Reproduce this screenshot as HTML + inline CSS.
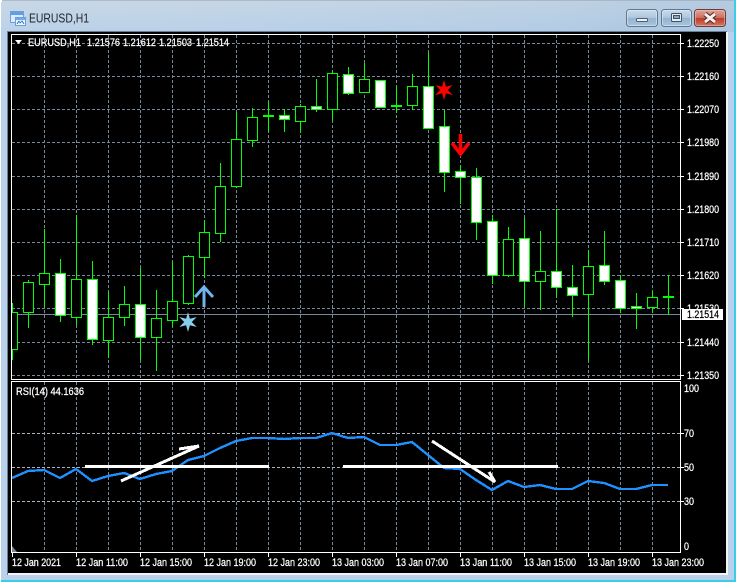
<!DOCTYPE html>
<html lang="en"><head><meta charset="utf-8"><title>EURUSD,H1</title>
<style>
html,body{margin:0;padding:0;background:#fff;width:738px;height:582px;overflow:hidden}
svg{display:block;position:absolute;left:0;top:0}
text{font-family:"Liberation Sans",sans-serif;font-size:11px;fill:#fff;stroke:#fff;stroke-width:.25px;white-space:pre}
</style></head><body>
<svg width="738" height="582" viewBox="0 0 738 582" xmlns="http://www.w3.org/2000/svg">
<defs>
<linearGradient id="tb" x1="0" y1="0" x2="0" y2="1"><stop offset="0" stop-color="#c6d5e4"/><stop offset="1" stop-color="#b6cfe8"/></linearGradient>
<linearGradient id="tbh" x1="0" y1="0" x2="1" y2="0"><stop offset="0" stop-color="#fff" stop-opacity=".06"/><stop offset=".75" stop-color="#8fb2d2" stop-opacity=".1"/><stop offset="1" stop-color="#8fb2d2" stop-opacity=".3"/></linearGradient>
<linearGradient id="bt" x1="0" y1="0" x2="0" y2="1"><stop offset="0" stop-color="#cbdcec"/><stop offset=".48" stop-color="#adc6dd"/><stop offset=".52" stop-color="#95b3cf"/><stop offset="1" stop-color="#a9c6df"/></linearGradient>
<linearGradient id="cl" x1="0" y1="0" x2="0" y2="1"><stop offset="0" stop-color="#dfa79d"/><stop offset=".48" stop-color="#cf6f5f"/><stop offset=".52" stop-color="#b93c2b"/><stop offset="1" stop-color="#cf7a62"/></linearGradient>
<clipPath id="mainclip"><rect x="12" y="35" width="668" height="344"/></clipPath>
</defs>

<!-- window -->
<rect x="1" y="0" width="735" height="582" fill="#3ccde6"/>
<rect x="1" y="0" width="733" height="580" fill="#b9d1ea"/>
<rect x="1" y="0" width="733" height="32" fill="url(#tb)"/>
<rect x="1" y="0" width="733" height="32" fill="url(#tbh)"/>
<path d="M1 .5H734" stroke="#8ea2b6" stroke-width="1" opacity=".5"/>
<rect x="0" y="0" width="2" height="2" fill="#fff"/>
<rect x="7" y="31" width="720" height="544" fill="#6b7d90"/>
<rect x="8" y="32" width="720" height="543" fill="#f4f4f4"/>
<rect x="8" y="32" width="718" height="541" fill="#000"/>

<!-- title icon -->
<g shape-rendering="crispEdges">
<rect x="10.5" y="11.5" width="13" height="11" fill="#dfeafa" stroke="#6c9ed8"/>
<rect x="11" y="12" width="12" height="3" fill="#5f9fe6"/>
<rect x="15.5" y="17.5" width="10" height="8" fill="#eef4fc" stroke="#6c9ed8"/>
<rect x="16" y="18" width="9" height="2" fill="#6fabe8"/>
<path d="M17 24L19 21L20 23L22 21L24 24" fill="none" stroke="#4f87c8"/>
</g>
<text x="29" y="22.5" textLength="60" lengthAdjust="spacingAndGlyphs" style="font-size:13px;fill:#20262c;stroke:none">EURUSD,H1</text>

<!-- window buttons -->
<rect x="626.5" y="9.5" width="31" height="17" rx="3" fill="url(#bt)" stroke="#5d7891"/>
<rect x="627.5" y="10.5" width="29" height="15" rx="2" fill="none" stroke="#e4eef7" stroke-opacity=".55"/>
<rect x="661.5" y="9.5" width="30" height="17" rx="3" fill="url(#bt)" stroke="#5d7891"/>
<rect x="662.5" y="10.5" width="28" height="15" rx="2" fill="none" stroke="#e4eef7" stroke-opacity=".55"/>
<rect x="694.5" y="9.5" width="31" height="17" rx="3" fill="url(#cl)" stroke="#6d3a3a"/>
<rect x="695.5" y="10.5" width="29" height="15" rx="2" fill="none" stroke="#f2cfc6" stroke-opacity=".5"/>
<rect x="636.5" y="18.5" width="11" height="3" rx="1" fill="#eef2f6" stroke="#4d5f72"/>
<rect x="671.5" y="13.5" width="10" height="8" rx="1" fill="#e8eef4" stroke="#3f5164"/>
<rect x="673.5" y="15.5" width="6" height="3" fill="#8ba6bf" stroke="#3f5164" stroke-width="1"/>
<path d="M705 14L715 22M715 14L705 22" stroke="#5b2a26" stroke-width="5"/>
<path d="M705 14L715 22M715 14L705 22" stroke="#f6f1ee" stroke-width="3"/>

<!-- grid -->
<g fill="none" stroke="#778899" stroke-width="1" stroke-dasharray="3 2" shape-rendering="crispEdges">
<path d="M12 43.5H680M12 76.5H680M12 109.5H680M12 142.5H680M12 176.5H680M12 209.5H680M12 242.5H680M12 275.5H680M12 308.5H680M12 342.5H680M12 375.5H680"/>
<path d="M44.5 35V379M76.5 35V379M108.5 35V379M140.5 35V379M172.5 35V379M204.5 35V379M236.5 35V379M268.5 35V379M300.5 35V379M332.5 35V379M364.5 35V379M396.5 35V379M428.5 35V379M460.5 35V379M492.5 35V379M524.5 35V379M556.5 35V379M588.5 35V379M620.5 35V379M652.5 35V379"/>
<path d="M44.5 382V552M76.5 382V552M108.5 382V552M140.5 382V552M172.5 382V552M204.5 382V552M236.5 382V552M268.5 382V552M300.5 382V552M332.5 382V552M364.5 382V552M396.5 382V552M428.5 382V552M460.5 382V552M492.5 382V552M524.5 382V552M556.5 382V552M588.5 382V552M620.5 382V552M652.5 382V552"/>
<path d="M12 433.5H680M12 467.5H680M12 501.5H680" stroke="#a9b4bf"/>
</g>
<path d="M12 314.5H681" stroke="#778899" shape-rendering="crispEdges"/>

<!-- candles -->
<g clip-path="url(#mainclip)" shape-rendering="crispEdges" stroke="#00ff00" stroke-width="1">
<path fill="none" d="M12.5 303V360M28.5 280V328M44.5 229V307M60.5 259V322M76.5 215V325M92.5 261V345M108.5 292V358M124.5 286V326M140.5 268V360M156.5 290V371M172.5 262V327M188.5 255V305M204.5 220V278M220.5 163V242M236.5 112V188M252.5 108V147M268.5 102V132M284.5 109V132M300.5 104V133M316.5 79V112M332.5 71V121M348.5 67V95M364.5 63V92M396.5 86V113M412.5 74V110M428.5 53V128M444.5 110V192M460.5 165V204M476.5 168V240M492.5 215V284M508.5 227V277M524.5 218V307M540.5 231V310M556.5 209V297M572.5 265V317M588.5 250V361M604.5 231V285M620.5 275V313M636.5 293V329M652.5 291V313M668.5 275V315"/>
<g fill="#000">
<rect x="7.5" y="312.5" width="10" height="37"/>
<rect x="23.5" y="282.5" width="10" height="30"/>
<rect x="39.5" y="273.5" width="10" height="11"/>
<rect x="71.5" y="279.5" width="10" height="38"/>
<rect x="103.5" y="317.5" width="10" height="23"/>
<rect x="119.5" y="304.5" width="10" height="13"/>
<rect x="151.5" y="318.5" width="10" height="19"/>
<rect x="167.5" y="301.5" width="10" height="19"/>
<rect x="183.5" y="256.5" width="10" height="47"/>
<rect x="199.5" y="232.5" width="10" height="25"/>
<rect x="215.5" y="186.5" width="10" height="47"/>
<rect x="231.5" y="139.5" width="10" height="47"/>
<rect x="247.5" y="117.5" width="10" height="23"/>
<rect x="295.5" y="106.5" width="10" height="15"/>
<rect x="327.5" y="73.5" width="10" height="36"/>
<rect x="359.5" y="79.5" width="10" height="13"/>
<rect x="407.5" y="86.5" width="10" height="19"/>
<rect x="503.5" y="239.5" width="10" height="36"/>
<rect x="535.5" y="271.5" width="10" height="10"/>
<rect x="583.5" y="266.5" width="10" height="28"/>
<rect x="647.5" y="297.5" width="10" height="10"/>
</g>
<g fill="#fff">
<rect x="55.5" y="273.5" width="10" height="42"/>
<rect x="87.5" y="279.5" width="10" height="60"/>
<rect x="135.5" y="304.5" width="10" height="33"/>
<rect x="263.5" y="115.5" width="10" height="1"/>
<rect x="279.5" y="115.5" width="10" height="4"/>
<rect x="311.5" y="106.5" width="10" height="3"/>
<rect x="343.5" y="74.5" width="10" height="19"/>
<rect x="375.5" y="80.5" width="10" height="27"/>
<rect x="391.5" y="105.5" width="10" height="1"/>
<rect x="423.5" y="86.5" width="10" height="42"/>
<rect x="439.5" y="126.5" width="10" height="46"/>
<rect x="455.5" y="171.5" width="10" height="6"/>
<rect x="471.5" y="177.5" width="10" height="45"/>
<rect x="487.5" y="221.5" width="10" height="54"/>
<rect x="519.5" y="238.5" width="10" height="43"/>
<rect x="551.5" y="271.5" width="10" height="16"/>
<rect x="567.5" y="287.5" width="10" height="8"/>
<rect x="599.5" y="265.5" width="10" height="16"/>
<rect x="615.5" y="280.5" width="10" height="28"/>
<rect x="631.5" y="306.5" width="10" height="2"/>
<rect x="663.5" y="296.5" width="10" height="1"/>
</g>
</g>

<!-- objects on price chart -->
<path d="M204 307V287M195 297L204 287L213 297" fill="none" stroke="#6fb5ec" stroke-width="3"/>
<polygon points="188,312 189.9,318.7 196.7,317 191.8,322 196.7,327 189.9,325.3 188,332 186.1,325.3 179.3,327 184.2,322 179.3,317 186.1,318.7" fill="#87ceeb"/>
<polygon points="444,80 445.9,86.7 452.7,85 447.8,90 452.7,95 445.9,93.3 444,100 442.1,93.3 435.3,95 440.2,90 435.3,85 442.1,86.7" fill="#ff0000"/>
<path d="M460.5 134V154M452 143L460.5 154L469 143" fill="none" stroke="#ff0000" stroke-width="3.5"/>

<!-- RSI -->
<polyline fill="none" stroke="#1e90ff" stroke-width="2.4" shape-rendering="crispEdges" points="12,478 28,471 44,470 60,478 76,469 92,481 108,476 124,473 140,479 156,474 172,471 188,460 204,456 220,448 236,441 252,438 268,438 284,439 300,438 316,438 332,433 348,438 364,437 380,445 396,445 412,442 428,455 444,468 460,469 476,480 492,490 508,481 524,487 540,485 556,489 572,489 588,481 604,483 620,489 636,489 652,485 668,485"/>
<g fill="none" stroke="#fff" shape-rendering="crispEdges">
<path d="M85 466.5H269M343 466.5H558" stroke-width="3"/>
<path d="M121 481L199 446M179 449L199 446" stroke-width="3"/>
<path d="M432 441L495 482M489 472L495 482" stroke-width="3"/>
</g>
<polygon points="12,546 17,552 12,552" fill="#778899"/>

<!-- frames and ticks -->
<g fill="none" stroke="#fff" stroke-width="1" shape-rendering="crispEdges">
<rect x="11.5" y="34.5" width="669" height="345"/>
<rect x="11.5" y="381.5" width="669" height="171"/>
<path d="M680 43.5H684M680 76.5H684M680 109.5H684M680 142.5H684M680 176.5H684M680 209.5H684M680 242.5H684M680 275.5H684M680 308.5H684M680 342.5H684M680 375.5H684M680 433.5H684M680 467.5H684M680 501.5H684"/>
<path d="M12.5 552V557M76.5 552V557M140.5 552V557M204.5 552V557M268.5 552V557M332.5 552V557M396.5 552V557M460.5 552V557M524.5 552V557M588.5 552V557M652.5 552V557"/>
</g>

<!-- text -->
<path d="M15 40H22L18.5 44Z" fill="#fff"/>
<text x="28" y="46" textLength="53" lengthAdjust="spacingAndGlyphs">EURUSD,H1</text>
<text x="87" y="46" textLength="33" lengthAdjust="spacingAndGlyphs">1.21576</text>
<text x="123" y="46" textLength="33" lengthAdjust="spacingAndGlyphs">1.21612</text>
<text x="159" y="46" textLength="33" lengthAdjust="spacingAndGlyphs">1.21503</text>
<text x="196" y="46" textLength="33" lengthAdjust="spacingAndGlyphs">1.21514</text>
<text x="16" y="395" textLength="68" lengthAdjust="spacingAndGlyphs">RSI(14) 44.1636</text>

<g>
<text x="687" y="47" textLength="32" lengthAdjust="spacingAndGlyphs">1.22250</text>
<text x="687" y="80" textLength="32" lengthAdjust="spacingAndGlyphs">1.22160</text>
<text x="687" y="113" textLength="32" lengthAdjust="spacingAndGlyphs">1.22070</text>
<text x="687" y="146" textLength="32" lengthAdjust="spacingAndGlyphs">1.21980</text>
<text x="687" y="180" textLength="32" lengthAdjust="spacingAndGlyphs">1.21890</text>
<text x="687" y="213" textLength="32" lengthAdjust="spacingAndGlyphs">1.21800</text>
<text x="687" y="246" textLength="32" lengthAdjust="spacingAndGlyphs">1.21710</text>
<text x="687" y="279" textLength="32" lengthAdjust="spacingAndGlyphs">1.21620</text>
<text x="687" y="312" textLength="32" lengthAdjust="spacingAndGlyphs">1.21530</text>
<text x="687" y="346" textLength="32" lengthAdjust="spacingAndGlyphs">1.21440</text>
<text x="687" y="379" textLength="32" lengthAdjust="spacingAndGlyphs">1.21350</text>
</g>
<rect x="682" y="309" width="41" height="11" fill="#fff"/>
<text x="687" y="318" textLength="32" lengthAdjust="spacingAndGlyphs" style="fill:#000;stroke:#000">1.21514</text>

<text x="684" y="392" textLength="15" lengthAdjust="spacingAndGlyphs">100</text>
<text x="684" y="437" textLength="10" lengthAdjust="spacingAndGlyphs">70</text>
<text x="684" y="471" textLength="10" lengthAdjust="spacingAndGlyphs">50</text>
<text x="684" y="505" textLength="10" lengthAdjust="spacingAndGlyphs">30</text>
<text x="684" y="550" textLength="5" lengthAdjust="spacingAndGlyphs">0</text>

<g>
<text x="12" y="566" textLength="49" lengthAdjust="spacingAndGlyphs">12 Jan 2021</text>
<text x="76" y="566" textLength="52" lengthAdjust="spacingAndGlyphs">12 Jan 11:00</text>
<text x="140" y="566" textLength="52" lengthAdjust="spacingAndGlyphs">12 Jan 15:00</text>
<text x="204" y="566" textLength="52" lengthAdjust="spacingAndGlyphs">12 Jan 19:00</text>
<text x="268" y="566" textLength="52" lengthAdjust="spacingAndGlyphs">12 Jan 23:00</text>
<text x="332" y="566" textLength="52" lengthAdjust="spacingAndGlyphs">13 Jan 03:00</text>
<text x="396" y="566" textLength="52" lengthAdjust="spacingAndGlyphs">13 Jan 07:00</text>
<text x="460" y="566" textLength="52" lengthAdjust="spacingAndGlyphs">13 Jan 11:00</text>
<text x="524" y="566" textLength="52" lengthAdjust="spacingAndGlyphs">13 Jan 15:00</text>
<text x="588" y="566" textLength="52" lengthAdjust="spacingAndGlyphs">13 Jan 19:00</text>
<text x="652" y="566" textLength="52" lengthAdjust="spacingAndGlyphs">13 Jan 23:00</text>
</g>
</svg>
</body></html>
